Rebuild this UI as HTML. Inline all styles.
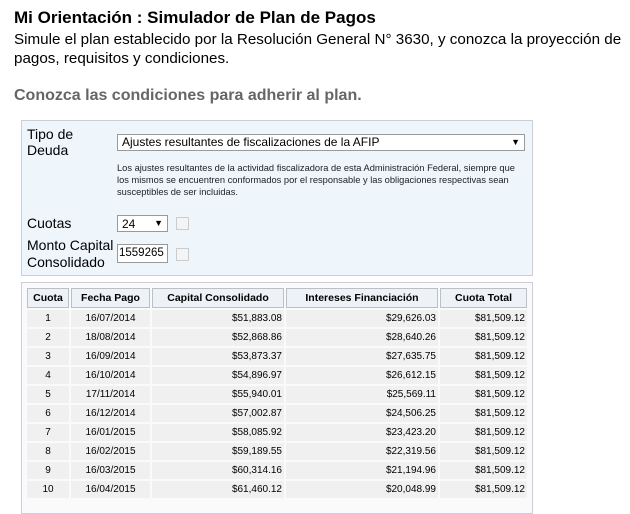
<!DOCTYPE html>
<html><head><meta charset="utf-8"><style>
body{margin:0;width:630px;height:500px;overflow:hidden;background:#fff;font-family:"Liberation Sans",Arial,sans-serif;color:#000;position:relative}
.a{position:absolute;white-space:nowrap}
.panel{position:absolute;left:21px;width:510px;border:1px solid #ccd;background:#eef5fb}
.sel{position:absolute;background:#fff;border:1px solid #999;font-size:12px;box-sizing:border-box;padding:1px 4px}
.cb{position:absolute;width:11px;height:11px;border:1px solid #ccc;background:#f4f4f4}
table{position:absolute;left:25px;top:286px;border-collapse:separate;border-spacing:2px;font-size:10px}
th{background:#eef2f6;border:1px solid #b8c0c8;height:20px;box-sizing:border-box;font-size:10.5px;padding:0}
td{background:#f0f0f0;height:17px;padding:0 2px;text-align:right}
td.c{text-align:center}
</style></head><body>
<div class="a" style="left:14px;top:8px;font-size:17px;font-weight:bold">Mi Orientación : Simulador de Plan de Pagos</div>
<div class="a" style="left:14px;top:30px;font-size:15.2px;line-height:19px">Simule el plan establecido por la Resolución General N° 3630, y conozca la proyección de<br>pagos, requisitos y condiciones.</div>
<div class="a" style="left:14px;top:87px;font-size:16px;font-weight:bold;color:#666">Conozca las condiciones para adherir al plan.</div>
<div class="panel" style="top:120px;height:154px"></div>
<div class="a" style="left:27px;top:126px;font-size:14px;line-height:16px">Tipo de<br>Deuda</div>
<div class="sel" style="left:117px;top:134px;width:408px;height:17px;font-size:12px;padding-top:0">Ajustes resultantes de fiscalizaciones de la AFIP<span style="position:absolute;right:4px;font-size:9px;top:2px">▼</span></div>
<div class="a" style="left:117px;top:162px;font-size:9.3px;line-height:12px;color:#222">Los ajustes resultantes de la actividad fiscalizadora de esta Administración Federal, siempre que<br>los mismos se encuentren conformados por el responsable y las obligaciones respectivas sean<br>susceptibles de ser incluidas.</div>
<div class="a" style="left:27px;top:215px;font-size:14px">Cuotas</div>
<div class="sel" style="left:117px;top:215px;width:51px;height:17px">24<span style="position:absolute;right:4px;font-size:9px;top:2px">▼</span></div>
<div class="cb" style="left:176px;top:217px"></div>
<div class="a" style="left:27px;top:237px;font-size:14px;line-height:17px">Monto Capital<br>Consolidado</div>
<div class="sel" style="left:117px;top:244px;width:51px;height:19px;padding:2px 1px;font-size:11.5px">1559265</div>
<div class="cb" style="left:176px;top:248px"></div>
<div class="panel" style="top:282px;height:230px;background:#fafafa"></div>
<table>
<tr><th style="width:42px">Cuota</th><th style="width:79px">Fecha Pago</th><th style="width:132px">Capital Consolidado</th><th style="width:152px">Intereses Financiación</th><th style="width:87px">Cuota Total</th></tr>
<tr><td class="c">1</td><td class="c">16/07/2014</td><td>$51,883.08</td><td>$29,626.03</td><td>$81,509.12</td></tr>
<tr><td class="c">2</td><td class="c">18/08/2014</td><td>$52,868.86</td><td>$28,640.26</td><td>$81,509.12</td></tr>
<tr><td class="c">3</td><td class="c">16/09/2014</td><td>$53,873.37</td><td>$27,635.75</td><td>$81,509.12</td></tr>
<tr><td class="c">4</td><td class="c">16/10/2014</td><td>$54,896.97</td><td>$26,612.15</td><td>$81,509.12</td></tr>
<tr><td class="c">5</td><td class="c">17/11/2014</td><td>$55,940.01</td><td>$25,569.11</td><td>$81,509.12</td></tr>
<tr><td class="c">6</td><td class="c">16/12/2014</td><td>$57,002.87</td><td>$24,506.25</td><td>$81,509.12</td></tr>
<tr><td class="c">7</td><td class="c">16/01/2015</td><td>$58,085.92</td><td>$23,423.20</td><td>$81,509.12</td></tr>
<tr><td class="c">8</td><td class="c">16/02/2015</td><td>$59,189.55</td><td>$22,319.56</td><td>$81,509.12</td></tr>
<tr><td class="c">9</td><td class="c">16/03/2015</td><td>$60,314.16</td><td>$21,194.96</td><td>$81,509.12</td></tr>
<tr><td class="c">10</td><td class="c">16/04/2015</td><td>$61,460.12</td><td>$20,048.99</td><td>$81,509.12</td></tr>
</table>
</body></html>
